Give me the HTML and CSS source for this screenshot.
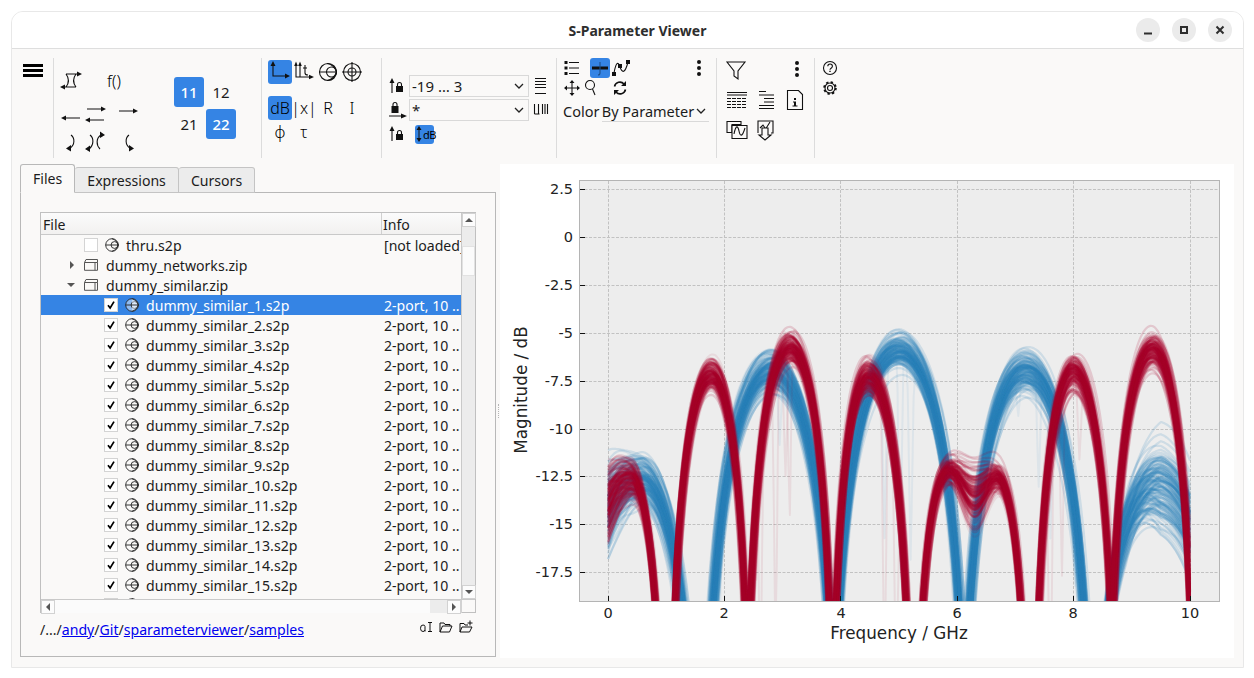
FILE: index.html
```html
<!DOCTYPE html>
<html lang="en">
<head>
    <meta charset="UTF-8">
    <title>S-Parameter Viewer</title>
    <link rel="stylesheet" href="styles.css">
</head>
<body>
    <svg class="sprite">
        <defs>
            <symbol id="i-swap" viewBox="0 0 24 24"><path d="M7 5h12M5 18h12M7 5c3 4 3 9 0 13M17 5c-3 4-3 9 0 13"/><path class="fa" d="M18 2.500l5 2.500-5 2.500zM6 15.500l-5 2.500 5 2.500z"/></symbol>
            <symbol id="i-left" viewBox="0 0 24 24"><path d="M5 15h16"/><path class="fa" d="M7 12.500l-5 2.500 5 2.500z"/></symbol>
            <symbol id="i-both" viewBox="0 0 24 24"><path d="M4 6h15M6 17h15"/><path class="fa" d="M18 3.500l5 2.500-5 2.500zM7 14.500l-5 2.500 5 2.500z"/></symbol>
            <symbol id="i-right" viewBox="0 0 24 24"><path d="M3 8h15"/><path class="fa" d="M17 5.500l5 2.500-5 2.500z"/></symbol>
            <symbol id="i-curl-l" viewBox="0 0 24 24"><path d="M12 5c4 3 4 10-1 13"/><path class="fa" d="M12 15l-5 3.500 5 3z"/></symbol>
            <symbol id="i-curl-both" viewBox="0 0 24 24"><path d="M7 5c4 3 4 10-1 14M18 5c-5 3-5 10-1 14"/><path class="fa" d="M7 15.500l-5 3.500 5 3zM17 1.500l5 3.500-5 3z"/></symbol>
            <symbol id="i-curl-r" viewBox="0 0 24 24"><path d="M13 5c-4 3-4 10 1 13"/><path class="fa" d="M13 15l5 3.500-5 3z"/></symbol>
            <symbol id="i-axes" viewBox="0 0 24 24"><path d="M5 5v11h13"/><path class="fa" d="M2.500 6l2.500-5 2.500 5zM17 13.500l5 2.500-5 2.500z"/></symbol>
            <symbol id="i-axes-t" viewBox="0 0 24 24"><path d="M4 6v11h14M8 6v11M13 5v8q0 2 3 2M11 8h4"/><path class="fa" d="M2.200 6L4 1.500 5.800 6zM6.200 6L8 1.500 9.800 6zM17 14.800l5 2.200-5 2.200z"/></symbol>
            <symbol id="i-smith" viewBox="0 0 24 24"><circle cx="12" cy="12" r="8.500"/><circle cx="15.500" cy="12" r="5"/><path d="M3.500 12h17M20.500 12C19 7.500 15.500 4 11 3.500M20.500 12C19 16.500 15.500 20 11 20.500"/></symbol>
            <symbol id="i-polar" viewBox="0 0 24 24"><circle cx="12" cy="12" r="8.500"/><circle cx="12" cy="12" r="4"/><path d="M2 12h20M12 2v20"/></symbol>
            <symbol id="i-lock-up" viewBox="0 0 20 20"><path d="M4 6v11"/><path class="fa" d="M1.500 7L4 2l2.500 5zM8 10h7v6H8z"/><path d="M9.500 10V8.500a2 2 0 0 1 4 0V10" /></symbol>
            <symbol id="i-lock-right" viewBox="0 0 20 20"><path d="M1 16h13M5 6V4.500a2 2 0 0 1 4 0V6"/><path class="fa" d="M3.500 6h7v7h-7zM13 13.500l6 2.500-6 2.500z"/></symbol>
            <symbol id="i-rows" viewBox="0 0 16 20"><path d="M2 2.500h11M2 5.500h11M2 8.500h11M2 11.500h11M2 17.500h11"/></symbol>
            <symbol id="i-cols" viewBox="0 0 16 20"><path d="M1.500 4v10M5.500 4v10M9.500 4v10M12 4v10M14.500 4v10M1.500 14h5"/></symbol>
            <symbol id="i-list" viewBox="0 0 20 20"><path d="M7 4.500h10M7 10h10M7 15.500h10"/><path class="fa" d="M2.500 3h3v3h-3zM2.500 8.500h3v3h-3zM2.500 14h3v3h-3z"/></symbol>
            <symbol id="i-mean" viewBox="0 0 20 20"><path class="thick" d="M2 10h16"/><path d="M10 4v11q0 2-2 2" class="soft"/></symbol>
            <symbol id="i-curve" viewBox="0 0 20 20"><path d="M3 15C5 4 7 3 9 9s5 7 8-5"/><path class="fa" d="M1 14h4v4H1zM7 6h4v4H7zM15 2h4v4h-4z"/></symbol>
            <symbol id="i-dots" viewBox="0 0 20 20"><path class="fa" d="M8 4a2 2 0 1 0 4 0 2 2 0 1 0-4 0M8 10a2 2 0 1 0 4 0 2 2 0 1 0-4 0M8 16a2 2 0 1 0 4 0 2 2 0 1 0-4 0"/></symbol>
            <symbol id="i-move" viewBox="0 0 20 20"><path d="M10 4v12M4 10h12"/><path class="fa" d="M7.500 5L10 2l2.500 3zM7.500 15l2.500 3 2.500-3zM5 7.500L2 10l3 2.500zM15 7.500l3 2.500-3 2.500z"/></symbol>
            <symbol id="i-search" viewBox="0 0 20 20"><circle cx="8" cy="7" r="4.500"/><path d="M10.500 11l2.500 6"/></symbol>
            <symbol id="i-refresh" viewBox="0 0 20 20"><path class="wide" d="M4.500 8.500a5.500 5.500 0 0 1 9.500-2.500M15.500 11.500A5.500 5.500 0 0 1 6 14"/><path class="fa" d="M16 3v5h-5zM4 17v-5h5z"/></symbol>
            <symbol id="i-filter" viewBox="0 0 24 24"><path d="M2 3h18l-7 9v8l-4-3v-5z"/></symbol>
            <symbol id="i-table" viewBox="0 0 24 24"><path d="M2 4.500h20M2 7h20"/><path class="dash" d="M2 10.500h20M2 13.500h20M2 16.500h20M2 19.500h20"/></symbol>
            <symbol id="i-tree" viewBox="0 0 24 24"><path d="M6 3.500h7M6 7h15M11 10.500h10M11 14h10M6 17.500h15M6 20.500h15"/></symbol>
            <symbol id="i-file" viewBox="0 0 24 24"><path d="M4.500 2.500h11l4 4v15h-15z"/><path class="fa" d="M11 10h2v2h-2zM10 13.500h3v4h1.500v1h-5v-1H11v-3h-1z"/></symbol>
            <symbol id="i-waves" viewBox="0 0 24 24"><path d="M2 3.500h14v3H7v8H2z"/><path class="paper" d="M7 7.500h15v13H7z"/><path d="M9 16c2-10 4-8 5-3s3 7 6-3"/></symbol>
            <symbol id="i-save" viewBox="0 0 24 24"><path d="M5 15V3h15v12h-2M7 10l3-3 2 3M12 12l5-8"/><path class="paper" d="M9 10h6v7h3l-6 5-6-5h3z"/></symbol>
            <symbol id="i-help" viewBox="0 0 20 20"><circle cx="10" cy="10" r="6.500"/><path d="M7.800 8.300c0-3 4.600-3 4.600 0 0 2-2.400 1.800-2.400 3.500"/><path class="fa" d="M9.300 12.700h1.400v1.400H9.300z"/></symbol>
            <symbol id="i-gear" viewBox="0 0 20 20"><circle cx="10" cy="10" r="2.500"/><circle cx="10" cy="10" r="5"/><circle class="teeth" cx="10" cy="10" r="5.800"/></symbol>
            <symbol id="i-dish" viewBox="0 0 14 14"><circle cx="7" cy="7" r="6.300"/><circle cx="9.500" cy="7" r="3.400"/><path d="M.7 7h12.600M7 .7C10 1.500 12.500 4 13.300 7 12.500 10 10 12.500 7 13.300"/></symbol>
            <symbol id="i-zip" viewBox="0 0 14 14"><path d="M.5 4.500h13v7.800H.5zM.5 4.500l1.500-3h11.500v3M11 4.500v7.800"/></symbol>
            <symbol id="i-check" viewBox="0 0 14 14"><path class="tick" d="M3.500 7.200l2.500 3.300 4.500-7.500"/></symbol>
            <symbol id="i-rename" viewBox="0 0 14 14"><path d="M9 2.500h4M9 11.500h4M11 2.500v9M6 11.500V6.500Q6 5 4 5 1.500 5 1.500 8.300q0 3.200 2.500 3.200 1.500 0 2-1.500"/></symbol>
            <symbol id="i-open" viewBox="0 0 14 14"><path d="M1 12V3h4l1 1.500h5V6M1 12l2.500-6H13l-2.500 6z"/></symbol>
            <symbol id="i-new" viewBox="0 0 14 14"><path d="M1 12V3.500h4l1 1.500h3M1 12l2-5h10l-2.500 5zM11 .5v5M8.500 3h5"/></symbol>
        </defs>
    </svg>

    <div class="window">
        <header class="titlebar">
            <span class="title">S-Parameter Viewer</span>
            <div class="win-btns">
                <button class="win-btn"><svg viewBox="0 0 12 12"><path d="M2 9.500h8"/></svg></button>
                <button class="win-btn"><svg viewBox="0 0 12 12"><path d="M3 3h6v6H3z"/></svg></button>
                <button class="win-btn"><svg viewBox="0 0 12 12"><path d="M2.500 2.500l7 7M9.500 2.500l-7 7"/></svg></button>
            </div>
        </header>

        <div class="toolbar">
            <div class="tgroup g-menu">
                <div class="hamburger"><span></span><span></span><span></span></div>
            </div>

            <div class="tgroup g-sparam">
                <div class="sgrid">
                    <svg class="ic top"><use href="#i-swap"/></svg>
                    <span class="func top">f()</span>
                    <svg class="ic"><use href="#i-left"/></svg>
                    <svg class="ic"><use href="#i-both"/></svg>
                    <svg class="ic"><use href="#i-right"/></svg>
                    <svg class="ic"><use href="#i-curl-l"/></svg>
                    <svg class="ic"><use href="#i-curl-both"/></svg>
                    <svg class="ic"><use href="#i-curl-r"/></svg>
                </div>
                <div class="ports">
                    <span class="port on">11</span>
                    <span class="port">12</span>
                    <span class="port">21</span>
                    <span class="port on">22</span>
                </div>
            </div>

            <div class="tgroup g-view">
                <div class="vgrid first">
                    <span class="vbtn on"><svg class="ic"><use href="#i-axes"/></svg></span>
                    <span class="vbtn"><svg class="ic"><use href="#i-axes-t"/></svg></span>
                    <span class="vbtn"><svg class="ic"><use href="#i-smith"/></svg></span>
                    <span class="vbtn"><svg class="ic"><use href="#i-polar"/></svg></span>
                </div>
                <div class="vgrid">
                    <span class="vbtn on unit">dB</span>
                    <span class="vbtn unit">|x|</span>
                    <span class="vbtn unit">R</span>
                    <span class="vbtn unit">I</span>
                    <span class="vbtn unit">φ</span>
                    <span class="vbtn unit">τ</span>
                </div>
            </div>

            <div class="tgroup g-limits">
                <div class="lrow">
                    <svg class="ic20"><use href="#i-lock-up"/></svg>
                    <div class="combo"><span>-19 … 3</span><svg class="chev" viewBox="0 0 10 6"><path d="M1 1l4 4 4-4"/></svg></div>
                    <svg class="ic-thin"><use href="#i-rows"/></svg>
                </div>
                <div class="lrow">
                    <svg class="ic20"><use href="#i-lock-right"/></svg>
                    <div class="combo"><span>*</span><svg class="chev" viewBox="0 0 10 6"><path d="M1 1l4 4 4-4"/></svg></div>
                    <svg class="ic-thin"><use href="#i-cols"/></svg>
                </div>
                <div class="lrow">
                    <svg class="ic20"><use href="#i-lock-up"/></svg>
                    <span class="db-btn"><svg viewBox="0 0 8 18"><path d="M4 4v10"/><path class="fa" d="M1.500 5L4 1l2.500 4zM1.500 13L4 17l2.500-4z"/></svg>dB</span>
                </div>
            </div>

            <div class="tgroup g-traces">
                <div class="trow">
                    <svg class="ic20"><use href="#i-list"/></svg>
                    <span class="tbtn on"><svg class="ic20"><use href="#i-mean"/></svg></span>
                    <svg class="ic20"><use href="#i-curve"/></svg>
                    <svg class="ic20 push"><use href="#i-dots"/></svg>
                </div>
                <div class="trow">
                    <svg class="ic20"><use href="#i-move"/></svg>
                    <svg class="ic20"><use href="#i-search"/></svg>
                    <svg class="ic20 gap8"><use href="#i-refresh"/></svg>
                </div>
                <div class="color-row">
                    <span class="color-label">Color</span>
                    <div class="flat-combo"><span>By Parameter</span><svg class="chev" viewBox="0 0 10 6"><path d="M1 1l4 4 4-4"/></svg></div>
                </div>
            </div>

            <div class="tgroup g-tools">
                <svg class="ic"><use href="#i-filter"/></svg>
                <span></span>
                <svg class="ic20 dots"><use href="#i-dots"/></svg>
                <svg class="ic"><use href="#i-table"/></svg>
                <svg class="ic"><use href="#i-tree"/></svg>
                <svg class="ic"><use href="#i-file"/></svg>
                <svg class="ic"><use href="#i-waves"/></svg>
                <svg class="ic"><use href="#i-save"/></svg>
            </div>

            <div class="tgroup g-help">
                <svg class="ic20"><use href="#i-help"/></svg>
                <svg class="ic20"><use href="#i-gear"/></svg>
            </div>
        </div>

        <div class="main">
            <div class="left">
                <div class="tabbar">
                    <span class="tab active">Files</span>
                    <span class="tab">Expressions</span>
                    <span class="tab">Cursors</span>
                </div>
                <div class="pane">
                    <div class="tree">
                        <div class="tree-top">
                            <div class="tree-view">
                                <div class="tree-head">
                                    <span class="head-file">File</span>
                                    <span class="head-info">Info</span>
                                </div>
                                <div class="rows">
                                    <div class="row d1"><span class="name"><i class="box"></i><svg class="dish"><use href="#i-dish"/></svg>thru.s2p</span><span class="info">[not loaded]</span></div>
                                    <div class="row d0"><span class="name"><i class="tri-r"></i><svg class="dish"><use href="#i-zip"/></svg>dummy_networks.zip</span><span class="info"></span></div>
                                    <div class="row d0"><span class="name"><i class="tri-d"></i><svg class="dish"><use href="#i-zip"/></svg>dummy_similar.zip</span><span class="info"></span></div>
                                    <div class="row d2 sel"><span class="name"><i class="box"><svg><use href="#i-check"/></svg></i><svg class="dish"><use href="#i-dish"/></svg>dummy_similar_1.s2p</span><span class="info">2-port, 10 ..</span></div>
                                    <div class="row d2"><span class="name"><i class="box"><svg><use href="#i-check"/></svg></i><svg class="dish"><use href="#i-dish"/></svg>dummy_similar_2.s2p</span><span class="info">2-port, 10 ..</span></div>
                                    <div class="row d2"><span class="name"><i class="box"><svg><use href="#i-check"/></svg></i><svg class="dish"><use href="#i-dish"/></svg>dummy_similar_3.s2p</span><span class="info">2-port, 10 ..</span></div>
                                    <div class="row d2"><span class="name"><i class="box"><svg><use href="#i-check"/></svg></i><svg class="dish"><use href="#i-dish"/></svg>dummy_similar_4.s2p</span><span class="info">2-port, 10 ..</span></div>
                                    <div class="row d2"><span class="name"><i class="box"><svg><use href="#i-check"/></svg></i><svg class="dish"><use href="#i-dish"/></svg>dummy_similar_5.s2p</span><span class="info">2-port, 10 ..</span></div>
                                    <div class="row d2"><span class="name"><i class="box"><svg><use href="#i-check"/></svg></i><svg class="dish"><use href="#i-dish"/></svg>dummy_similar_6.s2p</span><span class="info">2-port, 10 ..</span></div>
                                    <div class="row d2"><span class="name"><i class="box"><svg><use href="#i-check"/></svg></i><svg class="dish"><use href="#i-dish"/></svg>dummy_similar_7.s2p</span><span class="info">2-port, 10 ..</span></div>
                                    <div class="row d2"><span class="name"><i class="box"><svg><use href="#i-check"/></svg></i><svg class="dish"><use href="#i-dish"/></svg>dummy_similar_8.s2p</span><span class="info">2-port, 10 ..</span></div>
                                    <div class="row d2"><span class="name"><i class="box"><svg><use href="#i-check"/></svg></i><svg class="dish"><use href="#i-dish"/></svg>dummy_similar_9.s2p</span><span class="info">2-port, 10 ..</span></div>
                                    <div class="row d2"><span class="name"><i class="box"><svg><use href="#i-check"/></svg></i><svg class="dish"><use href="#i-dish"/></svg>dummy_similar_10.s2p</span><span class="info">2-port, 10 ..</span></div>
                                    <div class="row d2"><span class="name"><i class="box"><svg><use href="#i-check"/></svg></i><svg class="dish"><use href="#i-dish"/></svg>dummy_similar_11.s2p</span><span class="info">2-port, 10 ..</span></div>
                                    <div class="row d2"><span class="name"><i class="box"><svg><use href="#i-check"/></svg></i><svg class="dish"><use href="#i-dish"/></svg>dummy_similar_12.s2p</span><span class="info">2-port, 10 ..</span></div>
                                    <div class="row d2"><span class="name"><i class="box"><svg><use href="#i-check"/></svg></i><svg class="dish"><use href="#i-dish"/></svg>dummy_similar_13.s2p</span><span class="info">2-port, 10 ..</span></div>
                                    <div class="row d2"><span class="name"><i class="box"><svg><use href="#i-check"/></svg></i><svg class="dish"><use href="#i-dish"/></svg>dummy_similar_14.s2p</span><span class="info">2-port, 10 ..</span></div>
                                    <div class="row d2"><span class="name"><i class="box"><svg><use href="#i-check"/></svg></i><svg class="dish"><use href="#i-dish"/></svg>dummy_similar_15.s2p</span><span class="info">2-port, 10 ..</span></div>
                                    <div class="row d2"><span class="name"><i class="box"><svg><use href="#i-check"/></svg></i><svg class="dish"><use href="#i-dish"/></svg>dummy_similar_16.s2p</span><span class="info">2-port, 10 ..</span></div>
                                </div>
                            </div>
                            <div class="vscroll">
                                <span class="sb-btn"><i class="tri-u"></i></span>
                                <span class="v-before"></span>
                                <span class="v-thumb"></span>
                                <span class="v-after"></span>
                                <span class="sb-btn"><i class="tri-d small"></i></span>
                            </div>
                        </div>
                        <div class="tree-bottom">
                            <div class="hscroll">
                                <span class="sb-btn"><i class="tri-l"></i></span>
                                <span class="h-thumb"></span>
                                <span class="h-after"></span>
                                <span class="sb-btn"><i class="tri-r small"></i></span>
                            </div>
                            <span class="corner"></span>
                        </div>
                    </div>
                    <div class="path-row">
                        <span class="path">/.../<a href="#">andy</a>/<a href="#">Git</a>/<a href="#">sparameterviewer</a>/<a href="#">samples</a></span>
                        <div class="path-icons">
                            <svg class="ic14"><use href="#i-rename"/></svg>
                            <svg class="ic14"><use href="#i-open"/></svg>
                            <svg class="ic14"><use href="#i-new"/></svg>
                        </div>
                    </div>
                </div>
            </div>

            <div class="splitter"><span></span></div>

            <div class="plot">
                <svg class="chart" viewBox="500 164 734 494">
                    <defs>
                        <clipPath id="axes-clip"><rect x="580" y="181" width="639" height="420"/></clipPath>
                    </defs>
                    <rect class="axes-bg" x="579.500" y="180.500" width="640" height="421"/>
                    <path class="grid" d="M608.500 181V601M724.500 181V601M840.500 181V601M957.500 181V601M1073.500 181V601M1190.500 181V601M580 189.500H1219M580 237.500H1219M580 285.500H1219M580 333.500H1219M580 381.500H1219M580 429.500H1219M580 476.500H1219M580 524.500H1219M580 572.500H1219"/>
                    <g id="curves" clip-path="url(#axes-clip)"></g>
                    <rect class="axes-frame" x="579.500" y="180.500" width="640" height="421"/>
                    <path class="ticks" d="M580 189.500h5M580 237.500h5M580 285.500h5M580 333.500h5M580 381.500h5M580 429.500h5M580 476.500h5M580 524.500h5M580 572.500h5M608.500 601v-5M724.500 601v-5M840.500 601v-5M957.500 601v-5M1073.500 601v-5M1190.500 601v-5"/>
                    <g class="ylabels">
                        <text x="573" y="194">2.5</text>
                        <text x="573" y="242">0</text>
                        <text x="573" y="290">-2.5</text>
                        <text x="573" y="338">-5</text>
                        <text x="573" y="386">-7.5</text>
                        <text x="573" y="434">-10</text>
                        <text x="573" y="481">-12.5</text>
                        <text x="573" y="529">-15</text>
                        <text x="573" y="577">-17.5</text>
                    </g>
                    <g class="xlabels">
                        <text x="608" y="618">0</text>
                        <text x="724" y="618">2</text>
                        <text x="841" y="618">4</text>
                        <text x="957" y="618">6</text>
                        <text x="1073" y="618">8</text>
                        <text x="1190" y="618">10</text>
                    </g>
                    <text class="axis-title" x="899" y="639">Frequency / GHz</text>
                    <text class="axis-title" transform="translate(527 390) rotate(-90)">Magnitude / dB</text>
                </svg>
            </div>
        </div>
    </div>

    <script src="plot.js"></script>
</body>
</html>
```

FILE: styles.css
```css
* {
    margin: 0;
    padding: 0;
    box-sizing: border-box;
}

body {
    width: 1254px;
    height: 678px;
    overflow: hidden;
    background: #ffffff;
    font-family: 'Noto Sans', sans-serif;
    font-size: 14.1px;
    color: #1c1c1c;
}

.sprite {
    display: none;
}

.fa {
    fill: #111;
    stroke: none;
}

.paper {
    fill: #faf9f8;
}

.wide {
    stroke-width: 1.6;
}

.thick {
    stroke-width: 3;
}

.soft {
    stroke: #1d4f8a;
}

.tick {
    stroke-width: 2;
}

.dash {
    stroke-dasharray: 4 1;
}

.teeth {
    stroke-width: 2;
    stroke-dasharray: 2.3 2.25;
}

.ic, .ic20, .ic14, .ic-thin, .dish {
    fill: none;
    stroke: #111;
    stroke-width: 1.1;
    flex-shrink: 0;
}

.ic {
    width: 24px;
    height: 24px;
}

.ic20 {
    width: 20px;
    height: 20px;
}

.ic14 {
    width: 14px;
    height: 14px;
}

.ic-thin {
    width: 16px;
    height: 20px;
}

.window {
    margin: 11px 0 0 11px;
    width: 1233px;
    height: 657px;
    display: flex;
    flex-direction: column;
    background: #faf9f8;
    border: 1px solid #e8e8e8;
    border-radius: 12px 12px 0 0;
    overflow: hidden;
}

.titlebar {
    height: 37px;
    flex-shrink: 0;
    background: #ffffff;
    border-bottom: 1px solid #dedede;
    display: flex;
    align-items: center;
    justify-content: center;
    padding-left: 20px;
    position: relative;
}

.title {
    font-size: 14px;
    font-weight: 700;
    color: #2e2e2e;
}

.win-btns {
    position: absolute;
    right: 11px;
    top: 6px;
    display: flex;
    gap: 12px;
}

.win-btn {
    width: 24px;
    height: 24px;
    border: none;
    border-radius: 50%;
    background: #ebebeb;
    display: flex;
    align-items: center;
    justify-content: center;
}

.win-btn svg {
    width: 12px;
    height: 12px;
    fill: none;
    stroke: #2e2e2e;
    stroke-width: 2;
}

/* toolbar */
.toolbar {
    display: flex;
    height: 115px;
    flex-shrink: 0;
    padding: 9px 0 6px;
}

.tgroup {
    border-right: 1px solid #dcdcdc;
    flex-shrink: 0;
}

.g-menu {
    width: 42px;
    padding: 6px 0 0 11px;
}

.hamburger {
    display: flex;
    flex-direction: column;
    gap: 2px;
    width: 20px;
}

.hamburger span {
    height: 3px;
    background: #000;
}

.g-sparam {
    width: 208px;
    display: flex;
    padding-left: 4px;
}

.sgrid {
    display: grid;
    grid-template-columns: 26px 22px 44px;
    grid-template-rows: 32px 28px 26px;
    padding-top: 11px;
    height: 97px;
    place-items: center;
}

.sgrid .top {
    align-self: start;
}

.func {
    grid-column: span 2;
    margin-right: 6px;
    font-weight: 300;
    font-size: 16px;
    line-height: 24px;
    color: #000;
}

.ports {
    display: grid;
    grid-template-columns: 30px 30px;
    grid-auto-rows: 30px;
    gap: 2px;
    margin: 19px 0 0 24px;
    height: 62px;
}

.port {
    display: flex;
    align-items: center;
    justify-content: center;
    font-size: 15px;
    border-radius: 3px;
}

.port.on {
    background: #3584e4;
    color: #ffffff;
    font-weight: 500;
}

.g-view {
    width: 120px;
    padding: 2px 0 0 6px;
}

.vgrid {
    display: grid;
    grid-template-columns: repeat(4, 24px);
    grid-auto-rows: 24px;
}

.vgrid.first {
    margin-bottom: 12px;
}

.vbtn {
    display: flex;
    align-items: center;
    justify-content: center;
    border-radius: 3px;
}

.vbtn.on {
    background: #3584e4;
}

.unit {
    font-weight: 300;
    font-size: 16px;
    color: #000;
}

.g-limits {
    width: 175px;
    padding: 17px 0 0 6px;
    display: flex;
    flex-direction: column;
    gap: 2px;
}

.lrow {
    display: flex;
    align-items: center;
    height: 22px;
}

.combo {
    width: 120px;
    height: 22px;
    margin: 0 4px 0 1px;
    border: 1px solid #d9d9d9;
    display: flex;
    align-items: center;
    justify-content: space-between;
    padding: 0 4px 0 2px;
    font-size: 15px;
}

.chev {
    width: 10px;
    height: 6px;
    fill: none;
    stroke: #222;
    stroke-width: 1.3;
}

.db-btn {
    margin-left: 7px;
    width: 19px;
    height: 19px;
    background: #3584e4;
    border-radius: 3px;
    display: flex;
    align-items: center;
    font-size: 11px;
    letter-spacing: -0.6px;
    color: #000;
}

.db-btn svg {
    width: 8px;
    height: 18px;
    fill: none;
    stroke: #111;
    flex-shrink: 0;
}

.g-traces {
    width: 160px;
    padding: 0 7px 0 5px;
}

.trow {
    display: flex;
    align-items: center;
    height: 20px;
}

.tbtn {
    margin: 0 1px 0 8px;
    display: flex;
    border-radius: 3px;
}

.tbtn.on {
    background: #3584e4;
}

.push {
    margin-left: auto;
}

.gap8 {
    margin-left: 8px;
}

.color-row {
    display: flex;
    align-items: center;
    margin-top: 2px;
    height: 22px;
    font-size: 14.5px;
    white-space: nowrap;
}

.color-label {
    width: 40px;
    padding-left: 1px;
}

.flat-combo {
    width: 108px;
    height: 22px;
    border-bottom: 1px solid #d9d9d9;
    display: flex;
    align-items: center;
    justify-content: space-between;
    padding-right: 3px;
}

.g-tools {
    width: 98px;
    padding-left: 6px;
    display: grid;
    grid-template-columns: 28px 28px 32px;
    grid-template-rows: 26px 28px 28px;
    gap: 2px 0;
    align-content: start;
    place-items: center;
}

.g-tools .dots {
    margin: -4px 0 0 3px;
}

.g-help {
    border-right: none;
    padding-left: 5px;
    display: flex;
    flex-direction: column;
}

/* main area */
.main {
    flex: 1;
    min-height: 0;
    display: flex;
    padding: 0 9px 10px 8px;
}

.left {
    width: 476px;
    flex-shrink: 0;
    display: flex;
    flex-direction: column;
}

.tabbar {
    display: flex;
    align-items: flex-end;
    height: 29px;
    flex-shrink: 0;
    position: relative;
    z-index: 1;
}

.tab {
    height: 26px;
    padding: 0 12px;
    display: flex;
    align-items: center;
    background: #ececec;
    border: 1px solid #c4c4c4;
    border-left: none;
    border-radius: 3px 3px 0 0;
}

.tab.active {
    height: 29px;
    padding: 0 12px;
    background: #faf9f8;
    border-left: 1px solid #b8b8b8;
    border-color: #b8b8b8;
    border-bottom-color: #faf9f8;
}

.pane {
    flex: 1;
    margin-top: -1px;
    border: 1px solid #b8b8b8;
    padding: 19px 19px 0;
    display: flex;
    flex-direction: column;
}

.tree {
    width: 436px;
    height: 401px;
    flex-shrink: 0;
    border: 1px solid #c0c0c0;
    display: flex;
    flex-direction: column;
}

.tree-top {
    display: flex;
    height: 386px;
}

.tree-view {
    width: 420px;
    display: flex;
    flex-direction: column;
    overflow: hidden;
}

.tree-head {
    height: 22px;
    flex-shrink: 0;
    display: flex;
    border-bottom: 1px solid #c9c9c9;
    line-height: 23px;
    background: linear-gradient(#fbfbfb, #f2f1f0);
}

.head-file {
    width: 341px;
    padding-left: 2px;
    border-right: 1px solid #d0d0d0;
}

.head-info {
    padding-left: 1px;
}

.rows {
    flex: 1;
    overflow: hidden;
}

.row {
    height: 20px;
    display: flex;
    align-items: center;
    white-space: nowrap;
}

.row.sel {
    background: #3584e4;
    color: #ffffff;
}

.name {
    width: 341px;
    display: flex;
    align-items: center;
}

.d0 .name {
    padding-left: 26px;
}

.d1 .name {
    padding-left: 43px;
}

.d2 .name {
    padding-left: 63px;
}

.info {
    width: 79px;
    padding-left: 2px;
    overflow: hidden;
}

.box {
    width: 14px;
    height: 14px;
    margin-right: 7px;
    background: #ffffff;
    border: 1px solid #d4d4d4;
    display: block;
    flex-shrink: 0;
}

.box svg {
    display: block;
    width: 12px;
    height: 12px;
    fill: none;
    stroke: #000;
}

.dish {
    width: 14px;
    height: 14px;
    margin-right: 7px;
    stroke: #222;
    stroke-width: 0.9;
}

.d0 .dish {
    margin-right: 8px;
    stroke: #555;
    stroke-width: 1;
}

.sel .dish {
    fill: rgba(255, 255, 255, 0.45);
}

.tri-r, .tri-d, .tri-u, .tri-l {
    display: block;
    width: 0;
    height: 0;
    flex-shrink: 0;
}

.tri-r {
    margin: 0 10px 0 3px;
    border-left: 4px solid #555;
    border-top: 4px solid transparent;
    border-bottom: 4px solid transparent;
}

.tri-d {
    margin: 0 9px 0 0;
    border-top: 4px solid #555;
    border-left: 4px solid transparent;
    border-right: 4px solid transparent;
}

.tri-u {
    border-bottom: 4px solid #555;
    border-left: 4px solid transparent;
    border-right: 4px solid transparent;
}

.tri-l {
    border-right: 4px solid #555;
    border-top: 4px solid transparent;
    border-bottom: 4px solid transparent;
}

.tri-r.small, .tri-d.small {
    margin: 0;
}

/* scrollbars */
.vscroll {
    width: 14px;
    flex-shrink: 0;
    border-left: 1px solid #c9c9c9;
    display: flex;
    flex-direction: column;
}

.sb-btn {
    width: 14px;
    height: 14px;
    flex-shrink: 0;
    background: #fcfcfc;
    display: flex;
    align-items: center;
    justify-content: center;
    border: 1px solid #d2d2d2;
}

.v-before {
    height: 19px;
    background: #ececec;
}

.v-thumb {
    height: 30px;
    background: #fbfbfb;
    border: 1px solid #e2e2e2;
}

.v-after {
    flex: 1;
    background: #ececec;
}

.tree-bottom {
    display: flex;
    height: 14px;
    border-top: 1px solid #c9c9c9;
}

.hscroll {
    width: 420px;
    display: flex;
}

.h-thumb {
    flex: 1;
    background: #fbfbfb;
}

.h-after {
    width: 17px;
    background: #ececec;
}

.corner {
    flex: 1;
    border-left: 1px solid #d2d2d2;
}

.path-row {
    width: 436px;
    display: flex;
    align-items: center;
    justify-content: space-between;
    margin-top: 6px;
    height: 20px;
}

.path a {
    color: #0000ee;
}

.path-icons {
    display: flex;
    gap: 6px;
    padding: 0 3px 4px 0;
}

.path-icons svg {
    stroke-width: 1;
}

.splitter {
    width: 4px;
    flex-shrink: 0;
    display: flex;
    align-items: center;
    justify-content: center;
}

.splitter span {
    height: 14px;
    border-left: 1px dotted #b5b5b5;
}

/* plot */
.plot {
    flex: 1;
    background: #ffffff;
    height: 494px;
}

.chart {
    display: block;
    width: 734px;
    height: 494px;
    font-family: 'DejaVu Sans', sans-serif;
}

.axes-bg {
    fill: #ededed;
}

.axes-frame {
    fill: none;
    stroke: #b4b4b4;
}

.grid {
    fill: none;
    stroke: #c2c2c2;
    stroke-dasharray: 3 1.500;
}

.ticks {
    fill: none;
    stroke: #111;
}

.ylabels text {
    font-size: 14.5px;
    text-anchor: end;
    fill: #222;
}

.xlabels text {
    font-size: 14.5px;
    text-anchor: middle;
    fill: #222;
}

.axis-title {
    font-size: 16.8px;
    text-anchor: middle;
    fill: #222;
}
```

FILE: plot.js
```js
// Draws the two bundles of S-parameter traces into the chart
var SVG_NS = 'http://www.w3.org/2000/svg';

// a = left null, b = right null, p = peak position, h = peak dB, j = spread of the peak in dB
var RED_LOBES = [
    { a: -0.8, b: 1.0, p: 0.4, h: -12.6, j: 0.3 },
    { a: 1.03, b: 2.46, p: 1.78, h: -7.2, j: 0.45 },
    { a: 2.34, b: 3.91, p: 3.13, h: -5.8, j: 0.4 },
    { a: 3.81, b: 5.25, p: 4.47, h: -7.3, j: 0.4 },
    { a: 5.25, b: 7.25, p: 6.25, h: -11.4, j: 0.3, flat: 1.8 },
    { a: 7.29, b: 8.75, p: 8.0, h: -7.0, j: 0.45 },
    { a: 8.57, b: 10.1, p: 9.36, h: -5.9, j: 0.4 }
];

var BLUE_LOBES = [
    { a: -1.0, b: 1.6, p: 0.55, h: -12.6, j: 0.6 },
    { a: 1.62, b: 3.96, p: 2.82, h: -7.0, j: 0.55 },
    { a: 3.8, b: 6.2, p: 5.0, h: -5.9, j: 0.45 },
    { a: 6.04, b: 8.36, p: 7.17, h: -7.0, j: 0.5 },
    { a: 8.24, b: 10.83, p: 9.4, h: -13.0, j: 0.75 }
];

var seed = 12345;

function rnd() {
    seed = (seed * 1664525 + 1013904223) % 4294967296;
    return seed / 4294967296;
}

function gauss() {
    return (rnd() + rnd() + rnd() + rnd() - 2) * 1.7;
}

function xPos(f) {
    return 608 + 58.2 * f;
}

function yPos(db) {
    return 237 - 19.15 * db;
}

function lobeValue(lobe, f, dh, df) {
    var x = f - df;
    var u = x < lobe.p ? (x - lobe.p) / (lobe.p - lobe.a) : (x - lobe.p) / (lobe.b - lobe.p);
    if (Math.abs(u) >= 1) return -60;
    if (lobe.flat) u = (u < 0 ? -1 : 1) * Math.pow(Math.abs(u), lobe.flat);
    var c = Math.max(Math.cos(u * Math.PI / 2), 0.001);
    return lobe.h + dh + 20 * Math.log10(c);
}

function makeTrace(lobes, kind, notches) {
    var offsets = lobes.map(function (l) { return gauss() * l.j; });
    var df = gauss() * (kind === 'red' ? 0.026 : 0.042);
    var phase = rnd() * 6.28;
    var wiggle = gauss();
    var startSpread = gauss();
    var dipSpread = gauss();
    var endSpread = gauss();
    var d = '';

    for (var f = 0; f <= 10.001; f += 0.025) {
        var best = -60;
        for (var i = 0; i < lobes.length; i++) {
            best = Math.max(best, lobeValue(lobes[i], f, offsets[i], df));
        }
        best += 0.08 * Math.sin(f * 5 + phase);

        // messy low frequency end
        if (f < 0.9) best += startSpread * 0.9 * Math.pow(1 - f / 0.9, 1.5);
        best += 0.25 * wiggle * Math.sin(f * 9 + phase) * (f < 0.8 ? 1 - f / 0.8 : 0);

        if (kind === 'red') {
            // the red dip around 6.3 GHz
            var w = Math.exp(-Math.pow((f - 6.3) / 0.34, 2));
            best -= Math.max(2.1 + 0.9 * dipSpread, 0) * w;
        } else if (f > 8.9) {
            // blue fans out in the last lobe
            best += endSpread * 0.9 * Math.min((f - 8.9) / 0.6, 1);
        }

        notches.forEach(function (n) {
            best -= n[1] * Math.exp(-Math.pow((f - n[0]) / 0.035, 2));
        });

        d += (d ? 'L' : 'M') + xPos(f).toFixed(1) + ' ' + yPos(best).toFixed(1);
    }
    return d;
}

function addTrace(group, d, color, opacity, width) {
    var path = document.createElementNS(SVG_NS, 'path');
    path.setAttribute('d', d);
    path.setAttribute('fill', 'none');
    path.setAttribute('stroke', color);
    path.setAttribute('stroke-width', width);
    path.setAttribute('stroke-opacity', opacity);
    path.setAttribute('stroke-linejoin', 'round');
    group.appendChild(path);
}

function drawBundle(group, lobes, kind, color, spikes) {
    var i;
    for (i = 0; i < spikes.length; i++) {
        addTrace(group, makeTrace(lobes, kind, [spikes[i]]), color, 0.08, 2);
    }
    for (i = 0; i < 140; i++) {
        addTrace(group, makeTrace(lobes, kind, []), color, 0.16, 2.2);
    }
}

var group = document.getElementById('curves');

drawBundle(group, BLUE_LOBES, 'blue', '#2b85bb', [
    [1.9, 6], [2.95, 4], [4.75, 9], [5.02, 12], [5.2, 10], [7.6, 8], [7.05, 2], [7.4, 6], [8.02, 3]
]);
drawBundle(group, RED_LOBES, 'red', '#a5002c', [
    [2.55, 5], [2.62, 12], [2.88, 14], [3.05, 6], [3.12, 10], [4.75, 14], [4.95, 10], [5.4, 3], [7.6, 14], [7.8, 10], [8.1, 4]
]);
```
